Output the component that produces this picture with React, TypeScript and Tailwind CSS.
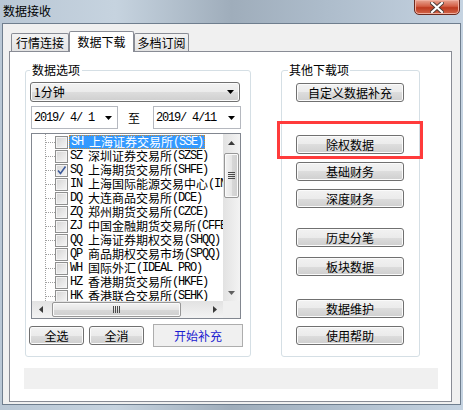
import React from "react";

const Tri = ({ dir, color = "#000" }: { dir: "up" | "down" | "left" | "right"; color?: string }) => {
  const pts =
    dir === "down" ? "0,0 7,0 3.5,4" : dir === "up" ? "0,4 7,4 3.5,0" : dir === "left" ? "4,0 4,7 0,3.5" : "0,0 0,7 4,3.5";
  const w = dir === "up" || dir === "down" ? 7 : 4;
  const h = dir === "up" || dir === "down" ? 4 : 7;
  return (
    <svg width={w} height={h} viewBox={`0 0 ${w} ${h}`}>
      <polygon points={pts} fill={color} />
    </svg>
  );
};

const Btn = ({ children, className = "" }: { children: React.ReactNode; className?: string }) => (
  <div
    className={`h-[19px] flex items-center justify-center rounded-[3px] border border-[#707070] bg-[linear-gradient(180deg,#f2f2f2_0%,#ebebeb_50%,#dddddd_50%,#cfcfcf_100%)] shadow-[inset_0_0_0_1px_#fbfbfb] text-[12px] leading-[14px] text-black ${className}`}
  >
    {children}
  </div>
);

const Mono = ({ children }: { children: React.ReactNode }) => (
  <span className="whitespace-pre font-['Liberation_Mono','Noto_Sans_CJK_SC',monospace] tracking-[-1.2px]">{children}</span>
);

const rows: { code: string; name: string; ex: string; checked?: boolean }[] = [
  { code: "SH", name: "上海证券交易所", ex: "(SSE)" },
  { code: "SZ", name: "深圳证券交易所", ex: "(SZSE)" },
  { code: "SQ", name: "上海期货交易所", ex: "(SHFE)", checked: true },
  { code: "IN", name: "上海国际能源交易中心", ex: "(INE)" },
  { code: "DQ", name: "大连商品交易所", ex: "(DCE)" },
  { code: "ZQ", name: "郑州期货交易所", ex: "(CZCE)" },
  { code: "ZJ", name: "中国金融期货交易所", ex: "(CFFEX)" },
  { code: "QQ", name: "上海证券期权交易", ex: "(SHQQ)" },
  { code: "QP", name: "商品期权交易市场", ex: "(SPQQ)" },
  { code: "WH", name: "国际外汇", ex: "(IDEAL PRO)" },
  { code: "HZ", name: "香港期货交易所", ex: "(HKFE)" },
  { code: "HK", name: "香港联合交易所", ex: "(SEHK)" },
];

const Grip = ({ vertical }: { vertical: boolean }) =>
  vertical ? (
    <div className="flex flex-col gap-[1px]">
      <div className="w-[7px] h-[1px] bg-[#4a4a4a]" />
      <div className="w-[7px] h-[1px] bg-[#4a4a4a]" />
      <div className="w-[7px] h-[1px] bg-[#4a4a4a]" />
      <div className="w-[7px] h-[1px] bg-[#4a4a4a]" />
    </div>
  ) : (
    <div className="flex flex-row gap-[1px]">
      <div className="w-[1px] h-[7px] bg-[#4a4a4a]" />
      <div className="w-[1px] h-[7px] bg-[#4a4a4a]" />
      <div className="w-[1px] h-[7px] bg-[#4a4a4a]" />
      <div className="w-[1px] h-[7px] bg-[#4a4a4a]" />
    </div>
  );

const Checkbox = ({ checked }: { checked?: boolean }) => (
  <div className="w-[13px] h-[13px] border border-[#8e8f8f] bg-[linear-gradient(135deg,#d4d4d4,#f7f7f7)] shadow-[inset_0_0_0_1px_#f4f4f4] flex items-center justify-center shrink-0">
    {checked && (
      <svg width="11" height="11" viewBox="0 0 11 11">
        <path d="M2 5.5 L4.5 8.5 L9.5 1.5" stroke="#3c5a9a" strokeWidth="1.6" fill="none" />
      </svg>
    )}
  </div>
);

export default function App() {
  return (
    <div className="relative w-[463px] h-[410px] overflow-hidden flex flex-col bg-[linear-gradient(90deg,#b9c7d5_0%,#c6d3df_25%,#9fadbb_50%,#adbccb_70%,#c5d3e1_100%)] font-['Noto_Sans_CJK_SC',sans-serif] text-[12px] leading-[14px] text-black">
      {/* title bar */}
      <div className="h-[23px] flex items-start shrink-0">
        <span className="ml-[3px] mt-[3px] text-[12px] leading-[16px] text-black">数据接收</span>
        <div className="ml-auto mr-[3px] w-[46px] h-[16px] -mt-px rounded-b-[5px] border border-[#6b2a1e] bg-[linear-gradient(180deg,#e8a593_0%,#d35f45_45%,#bd3a1f_55%,#d2664a_100%)] shadow-[inset_0_0_0_1px_#f0b0a0] flex items-center justify-center">
          <svg width="14" height="11" viewBox="0 0 14 11">
            <path d="M2 1 L12 10 M12 1 L2 10" stroke="#4a3a36" strokeWidth="4" strokeLinecap="square" />
            <path d="M2 1 L12 10 M12 1 L2 10" stroke="#ffffff" strokeWidth="2.2" strokeLinecap="square" />
          </svg>
        </div>
      </div>

      {/* client area */}
      <div className="ml-[2px] w-[459px] h-[382px] border border-[#6f7e8e] bg-[#f0f0f0] flex flex-col">
        {/* tabs */}
        <div className="pt-[7px] pl-[8px] flex items-end h-[27px] shrink-0">
          <div className="w-[58px] h-[18px] border border-b-0 border-[#898c95] rounded-t-[2px] bg-[linear-gradient(180deg,#f3f3f3,#e3e3e3)] flex items-center justify-center pt-[1px]">
            行情连接
          </div>
          <div className="relative z-10 w-[65px] h-[21px] -mb-px border border-b-0 border-[#898c95] rounded-t-[2px] bg-white flex items-center justify-center pb-[1px]">
            数据下载
          </div>
          <div className="w-[55px] h-[18px] border border-b-0 border-[#898c95] rounded-t-[2px] bg-[linear-gradient(180deg,#f3f3f3,#e3e3e3)] flex items-center justify-center pt-[1px]">
            多档订阅
          </div>
        </div>

        {/* panel */}
        <div className="ml-[6px] w-[443px] h-[351px] border border-[#898c95] bg-white flex flex-col">
          <div className="flex flex-row pl-[15px] mt-[18px]">
            {/* left group */}
            <div className="relative w-[226px] h-[287px] border border-[#d5dfe5] rounded-[3px] flex flex-col">
              <span className="absolute left-[4px] -top-[8px] px-[2px] bg-white leading-[14px]">数据选项</span>
              {/* combo */}
              <div className="ml-[4px] mt-[11px] w-[210px] h-[20px] rounded-[3px] border border-[#707070] bg-[linear-gradient(180deg,#f2f2f2_0%,#ebebeb_50%,#dddddd_50%,#cfcfcf_100%)] shadow-[inset_0_0_0_1px_#fbfbfb] flex items-center pl-[3px] pr-[5px]">
                <span>1分钟</span>
                <span className="ml-auto flex">
                  <Tri dir="down" />
                </span>
              </div>
              {/* dates */}
              <div className="mt-[4px] ml-[5px] h-[23px] flex items-center">
                <div className="w-[87px] h-[23px] border border-[#b5b8bf] bg-white flex items-center pl-[2px] pr-[5px]">
                  <Mono>2019/ 4/ 1</Mono>
                  <span className="ml-auto flex">
                    <Tri dir="down" />
                  </span>
                </div>
                <span className="ml-[10px] w-[13px]">至</span>
                <div className="ml-[12px] w-[88px] h-[23px] border border-[#b5b8bf] bg-white flex items-center pl-[2px] pr-[5px]">
                  <Mono>2019/ 4/11</Mono>
                  <span className="ml-auto flex">
                    <Tri dir="down" />
                  </span>
                </div>
              </div>
              {/* list */}
              <div className="mt-[4px] ml-[5px] w-[210px] h-[186px] border border-[#828790] bg-white flex flex-col">
                <div className="flex flex-row h-[167px]">
                  <div className="relative w-[191px] h-[167px] overflow-hidden pt-[1px]">
                    <div className="absolute left-[13px] top-0 h-[167px] border-l border-dotted border-[#a0a0a0]" />
                    {rows.map((r, i) => (
                      <div key={i} className="relative h-[14px] w-max flex items-center whitespace-nowrap">
                        <div className="ml-[14px] w-[9px] shrink-0 border-t border-dotted border-[#a0a0a0]" />
                        <Checkbox checked={r.checked} />
                        {i === 0 ? (
                          <div className="ml-[1px] h-[14px] shrink-0 flex items-center px-[1px] bg-[#3399ff] text-white border border-dotted border-[#d08a30]">
                            <Mono>{r.code + " "}</Mono>
                            <span>{r.name}</span>
                            <Mono>{r.ex}</Mono>
                          </div>
                        ) : (
                          <div className="ml-[2px] h-[14px] shrink-0 flex items-center">
                            <Mono>{r.code + " "}</Mono>
                            <span>{r.name}</span>
                            <Mono>{r.ex}</Mono>
                          </div>
                        )}
                      </div>
                    ))}
                  </div>
                  {/* vertical scrollbar */}
                  <div className="w-[17px] h-[167px] bg-[linear-gradient(90deg,#e2e2e2,#f3f3f3)] flex flex-col items-center">
                    <div className="h-[17px] w-full flex items-center justify-center">
                      <Tri dir="up" color="#3a3a3a" />
                    </div>
                    <div className="mt-[2px] w-[15px] h-[45px] rounded-[2px] border border-[#979797] bg-[linear-gradient(90deg,#f3f3f3_0%,#e6e6e6_50%,#d8d8d8_50%,#cfcfcf_100%)] shadow-[inset_0_0_0_1px_#fafafa] flex items-center justify-center">
                      <Grip vertical />
                    </div>
                    <div className="mt-auto h-[17px] w-full flex items-center justify-center">
                      <Tri dir="down" color="#606060" />
                    </div>
                  </div>
                </div>
                <div className="flex flex-row h-[17px]">
                  {/* horizontal scrollbar */}
                  <div className="w-[191px] h-[17px] bg-[linear-gradient(180deg,#e2e2e2,#f3f3f3)] flex flex-row items-center">
                    <div className="w-[17px] h-full flex items-center justify-center">
                      <Tri dir="left" color="#3a3a3a" />
                    </div>
                    <div className="ml-[3px] w-[129px] h-[15px] rounded-[2px] border border-[#979797] bg-[linear-gradient(180deg,#f3f3f3_0%,#e6e6e6_50%,#d8d8d8_50%,#cfcfcf_100%)] shadow-[inset_0_0_0_1px_#fafafa] flex items-center justify-center">
                      <Grip vertical={false} />
                    </div>
                    <div className="ml-auto w-[17px] h-full flex items-center justify-center">
                      <Tri dir="right" color="#3a3a3a" />
                    </div>
                  </div>
                  <div className="w-[17px] h-[17px] bg-[#f0f0f0]" />
                </div>
              </div>
              {/* buttons */}
              <div className="mt-[5px] h-[23px] flex items-center">
                <Btn className="ml-[3px] w-[55px]">全选</Btn>
                <Btn className="ml-[5px] w-[55px]">全消</Btn>
                <div className="ml-[9px] w-[90px] h-[23px] border border-[#adadad] bg-[#f0f0f0] flex items-center justify-center text-[#1a1ad0]">
                  开始补充
                </div>
              </div>
            </div>

            {/* right group */}
            <div className="relative ml-[30px] w-[139px] h-[287px] border border-[#d5dfe5] rounded-[3px] flex flex-col">
              <span className="absolute left-[6px] -top-[8px] px-[1px] bg-white leading-[14px]">其他下载项</span>
              <Btn className="ml-[14px] mt-[12px] w-[108px]">自定义数据补充</Btn>
              <Btn className="ml-[14px] mt-[33px] w-[108px]">除权数据</Btn>
              <Btn className="ml-[14px] mt-[8px] w-[108px]">基础财务</Btn>
              <Btn className="ml-[14px] mt-[8px] w-[108px]">深度财务</Btn>
              <Btn className="ml-[14px] mt-[20px] w-[108px]">历史分笔</Btn>
              <Btn className="ml-[14px] mt-[10px] w-[108px]">板块数据</Btn>
              <Btn className="ml-[14px] mt-[23px] w-[108px]">数据维护</Btn>
              <Btn className="ml-[14px] mt-[8px] w-[108px]">使用帮助</Btn>
            </div>
          </div>

          {/* status */}
          <div className="ml-[14px] mt-[11px] w-[414px] h-[21px] bg-[#f0f0f0]" />
        </div>
      </div>

      {/* red annotation */}
      <div className="absolute left-[277px] top-[121px] w-[146px] h-[38px] border-[3px] border-[#ff3b3b]" />
    </div>
  );
}
